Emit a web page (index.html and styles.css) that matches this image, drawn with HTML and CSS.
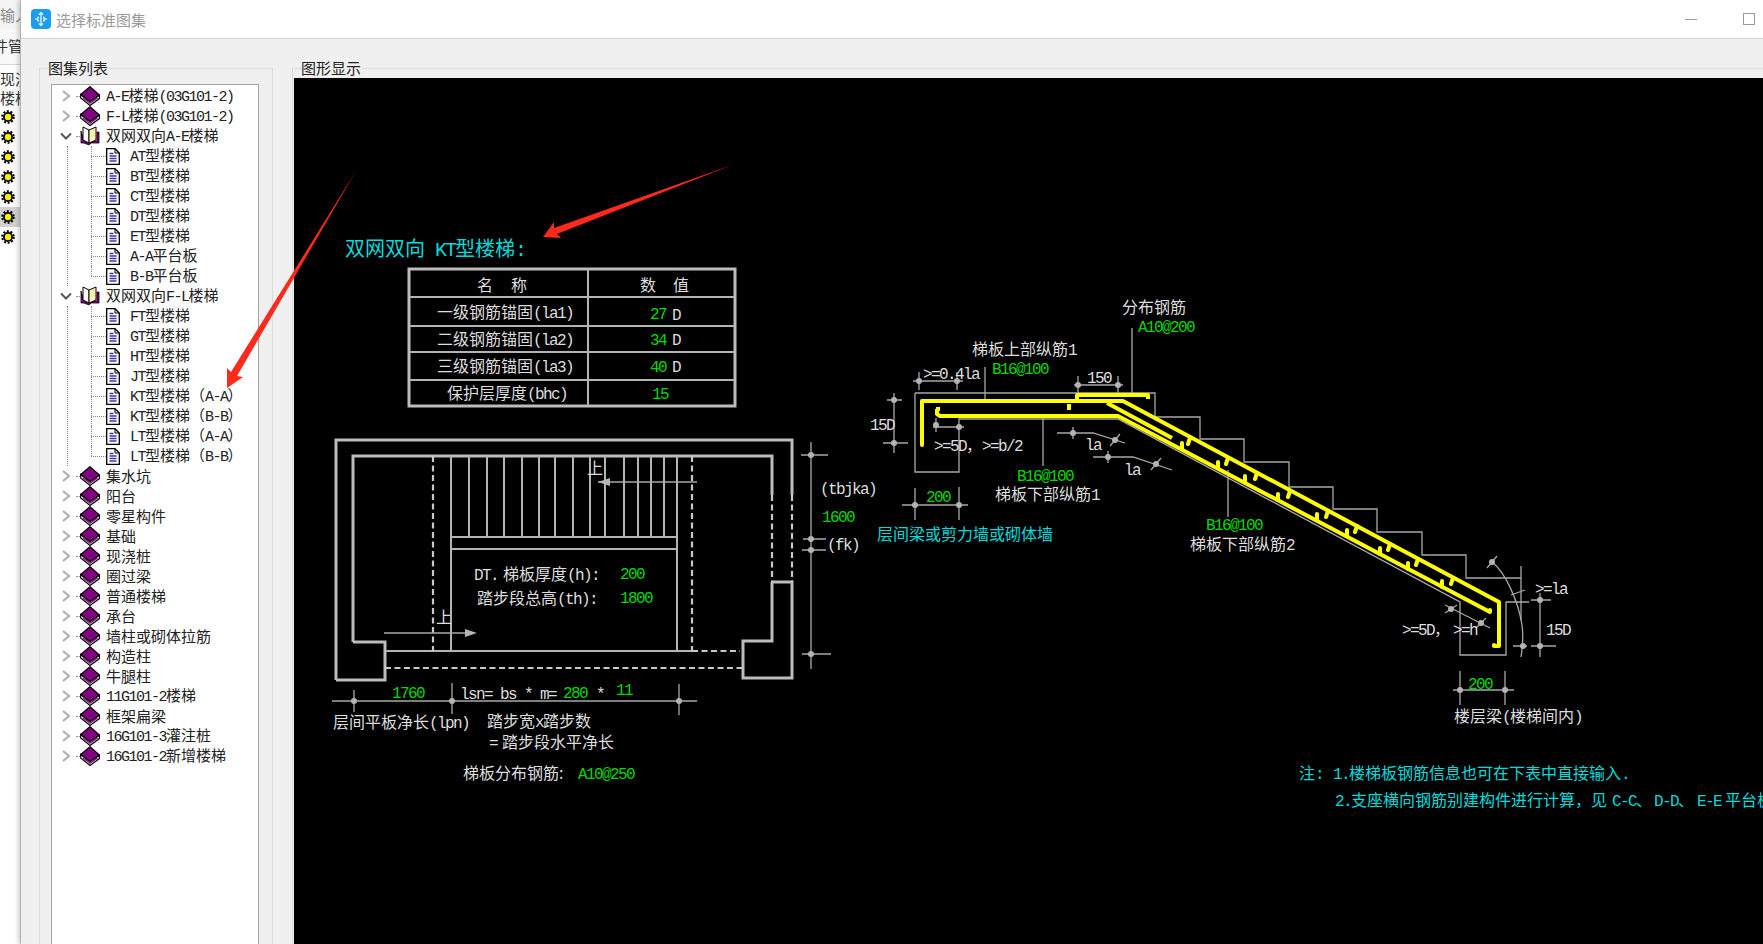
FILE: index.html
```html
<!DOCTYPE html>
<html lang="zh-CN">
<head>
<meta charset="utf-8">
<title>选择标准图集</title>
<link rel="stylesheet" href="styles.css">
</head>
<body>
<svg width="0" height="0" class="defs">
  <symbol id="book" viewBox="0 0 20 20">
    <path d="M.700 8.500v3.500L10 19.500l9.500-7V9L10 15.500z" fill="#fff" stroke="#000" stroke-width="1.200"/>
    <path d="M.700 8.500 10 .700l9.500 8.300L10 15.500z" fill="#800080" stroke="#000" stroke-width="1.200"/>
    <path d="M3 12l7 5.200 7.500-5.200" fill="none" stroke="#800080" stroke-width="1.100"/>
  </symbol>
  <symbol id="open" viewBox="0 0 20 20">
    <path d="M1 5v12h3l5 2 2-2h8V6h-2v9h-6l-3 2-4-2z" fill="#800080" stroke="#000" stroke-width=".8"/>
    <path d="M3 1l6 3v13l-6-3z" fill="#fff" stroke="#000"/>
    <path d="M9 4l7-3v13l-7 3z" fill="#ffffc0" stroke="#000"/>
    <path d="M12 4v8M14 3v8" stroke="#c8c870" stroke-dasharray="1 1"/>
  </symbol>
  <symbol id="doc" viewBox="0 0 14 17">
    <path d="M.700.700h8.300l4.300 4.300v11.300H.700z" fill="#fff" stroke="#000" stroke-width="1.300"/>
    <path d="M9 1v4h4" fill="none" stroke="#000"/>
    <path d="M3.500 5.500h4M3.500 8h7M3.500 10.500h7M3.500 13h7" stroke="#3a3aa8" stroke-width="1.300"/>
  </symbol>
  <symbol id="closed" viewBox="0 0 14 14"><path d="M4 2l6 5-6 5" fill="none" stroke="#b0b0b0" stroke-width="2.200"/></symbol>
  <symbol id="expanded" viewBox="0 0 14 14"><path d="M2 4.500l5 5 5-5" fill="none" stroke="#555" stroke-width="2"/></symbol>
  <symbol id="gear" viewBox="0 0 14 14">
    <circle cx="7" cy="7" r="5" fill="#000"/>
    <circle cx="7" cy="7" r="5.800" fill="none" stroke="#000" stroke-width="2" stroke-dasharray="2 1.640"/>
    <circle cx="7" cy="7" r="3.200" fill="#f5f000"/>
  </symbol>
</svg>

<div class="app">
  <aside class="strip">
    <div class="strip-top">输入</div>
    <div class="strip-sub"><span>件管</span></div>
    <div class="strip-list">
      <div class="strip-text">现浇</div>
      <div class="strip-text">楼梯</div>
      <div class="gear-row"><svg class="gear"><use href="#gear"/></svg></div>
      <div class="gear-row"><svg class="gear"><use href="#gear"/></svg></div>
      <div class="gear-row"><svg class="gear"><use href="#gear"/></svg></div>
      <div class="gear-row"><svg class="gear"><use href="#gear"/></svg></div>
      <div class="gear-row"><svg class="gear"><use href="#gear"/></svg></div>
      <div class="gear-row is-selected"><svg class="gear"><use href="#gear"/></svg></div>
      <div class="gear-row"><svg class="gear"><use href="#gear"/></svg></div>
    </div>
  </aside>

  <main class="dialog">
    <header class="titlebar">
      <svg class="app-icon" viewBox="0 0 20 20">
        <rect width="20" height="20" rx="4" fill="#1c9cf2"/>
        <path d="M10 3.500v13M4 10h3.500M12.500 10H16M8 5.500 10 3.500l2 2M8 14.500l2 2 2-2M7.500 7.500a4 4 0 0 0 0 5M12.500 7.500a4 4 0 0 1 0 5" fill="none" stroke="#fff" stroke-width="1.200"/>
      </svg>
      <span class="title">选择标准图集</span>
      <span class="win-buttons">
        <span class="win-min"></span>
        <span class="win-max"></span>
      </span>
    </header>

    <div class="dialog-body">
      <section class="group group-list">
        <span class="group-label">图集列表</span>
        <div class="tree">
          <div class="row"><svg class="chev"><use href="#closed"/></svg><i class="stub"></i><svg class="bk"><use href="#book"/></svg><span class="lbl"><b>A-E</b>楼梯<b>(03G101-2)</b></span></div>
          <div class="row"><svg class="chev"><use href="#closed"/></svg><i class="stub"></i><svg class="bk"><use href="#book"/></svg><span class="lbl"><b>F-L</b>楼梯<b>(03G101-2)</b></span></div>
          <div class="row"><svg class="chev"><use href="#expanded"/></svg><i class="stub"></i><svg class="bk"><use href="#open"/></svg><span class="lbl">双网双向<b>A-E</b>楼梯</span></div>
          <div class="kids">
            <div class="kid"><i class="link"></i><svg class="dc"><use href="#doc"/></svg><span class="lbl"><b>AT</b>型楼梯</span></div>
            <div class="kid"><i class="link"></i><svg class="dc"><use href="#doc"/></svg><span class="lbl"><b>BT</b>型楼梯</span></div>
            <div class="kid"><i class="link"></i><svg class="dc"><use href="#doc"/></svg><span class="lbl"><b>CT</b>型楼梯</span></div>
            <div class="kid"><i class="link"></i><svg class="dc"><use href="#doc"/></svg><span class="lbl"><b>DT</b>型楼梯</span></div>
            <div class="kid"><i class="link"></i><svg class="dc"><use href="#doc"/></svg><span class="lbl"><b>ET</b>型楼梯</span></div>
            <div class="kid"><i class="link"></i><svg class="dc"><use href="#doc"/></svg><span class="lbl"><b>A-A</b>平台板</span></div>
            <div class="kid"><i class="link"></i><svg class="dc"><use href="#doc"/></svg><span class="lbl"><b>B-B</b>平台板</span></div>
          </div>
          <div class="row"><svg class="chev"><use href="#expanded"/></svg><i class="stub"></i><svg class="bk"><use href="#open"/></svg><span class="lbl">双网双向<b>F-L</b>楼梯</span></div>
          <div class="kids">
            <div class="kid"><i class="link"></i><svg class="dc"><use href="#doc"/></svg><span class="lbl"><b>FT</b>型楼梯</span></div>
            <div class="kid"><i class="link"></i><svg class="dc"><use href="#doc"/></svg><span class="lbl"><b>GT</b>型楼梯</span></div>
            <div class="kid"><i class="link"></i><svg class="dc"><use href="#doc"/></svg><span class="lbl"><b>HT</b>型楼梯</span></div>
            <div class="kid"><i class="link"></i><svg class="dc"><use href="#doc"/></svg><span class="lbl"><b>JT</b>型楼梯</span></div>
            <div class="kid"><i class="link"></i><svg class="dc"><use href="#doc"/></svg><span class="lbl"><b>KT</b>型楼梯（<b>A-A</b>）</span></div>
            <div class="kid"><i class="link"></i><svg class="dc"><use href="#doc"/></svg><span class="lbl"><b>KT</b>型楼梯（<b>B-B</b>）</span></div>
            <div class="kid"><i class="link"></i><svg class="dc"><use href="#doc"/></svg><span class="lbl"><b>LT</b>型楼梯（<b>A-A</b>）</span></div>
            <div class="kid"><i class="link"></i><svg class="dc"><use href="#doc"/></svg><span class="lbl"><b>LT</b>型楼梯（<b>B-B</b>）</span></div>
          </div>
          <div class="row"><svg class="chev"><use href="#closed"/></svg><i class="stub"></i><svg class="bk"><use href="#book"/></svg><span class="lbl">集水坑</span></div>
          <div class="row"><svg class="chev"><use href="#closed"/></svg><i class="stub"></i><svg class="bk"><use href="#book"/></svg><span class="lbl">阳台</span></div>
          <div class="row"><svg class="chev"><use href="#closed"/></svg><i class="stub"></i><svg class="bk"><use href="#book"/></svg><span class="lbl">零星构件</span></div>
          <div class="row"><svg class="chev"><use href="#closed"/></svg><i class="stub"></i><svg class="bk"><use href="#book"/></svg><span class="lbl">基础</span></div>
          <div class="row"><svg class="chev"><use href="#closed"/></svg><i class="stub"></i><svg class="bk"><use href="#book"/></svg><span class="lbl">现浇桩</span></div>
          <div class="row"><svg class="chev"><use href="#closed"/></svg><i class="stub"></i><svg class="bk"><use href="#book"/></svg><span class="lbl">圈过梁</span></div>
          <div class="row"><svg class="chev"><use href="#closed"/></svg><i class="stub"></i><svg class="bk"><use href="#book"/></svg><span class="lbl">普通楼梯</span></div>
          <div class="row"><svg class="chev"><use href="#closed"/></svg><i class="stub"></i><svg class="bk"><use href="#book"/></svg><span class="lbl">承台</span></div>
          <div class="row"><svg class="chev"><use href="#closed"/></svg><i class="stub"></i><svg class="bk"><use href="#book"/></svg><span class="lbl">墙柱或砌体拉筋</span></div>
          <div class="row"><svg class="chev"><use href="#closed"/></svg><i class="stub"></i><svg class="bk"><use href="#book"/></svg><span class="lbl">构造柱</span></div>
          <div class="row"><svg class="chev"><use href="#closed"/></svg><i class="stub"></i><svg class="bk"><use href="#book"/></svg><span class="lbl">牛腿柱</span></div>
          <div class="row"><svg class="chev"><use href="#closed"/></svg><i class="stub"></i><svg class="bk"><use href="#book"/></svg><span class="lbl"><b>11G101-2</b>楼梯</span></div>
          <div class="row"><svg class="chev"><use href="#closed"/></svg><i class="stub"></i><svg class="bk"><use href="#book"/></svg><span class="lbl">框架扁梁</span></div>
          <div class="row"><svg class="chev"><use href="#closed"/></svg><i class="stub"></i><svg class="bk"><use href="#book"/></svg><span class="lbl"><b>16G101-3</b>灌注桩</span></div>
          <div class="row"><svg class="chev"><use href="#closed"/></svg><i class="stub"></i><svg class="bk"><use href="#book"/></svg><span class="lbl"><b>16G101-2</b>新增楼梯</span></div>
        </div>
      </section>

      <section class="group group-view">
        <span class="group-label">图形显示</span>
        <svg class="canvas" viewBox="294 78 1469 866">
          <!-- heading and parameter table -->
          <text class="c h1" x="345" y="249">双网双向<tspan class="l" x="435">KT</tspan><tspan x="455">型楼梯</tspan><tspan class="l" x="515">:</tspan></text>
          <rect class="w2" x="409" y="269" width="326" height="137"/>
          <path class="w1" d="M588 269v137M409 297h326M409 326h326M409 352h326M409 380h326"/>
          <text class="w" x="477" y="285">名</text><text class="w" x="511" y="285">称</text>
          <text class="w" x="640" y="285">数</text><text class="w" x="673" y="285">值</text>
          <text class="w" x="437" y="312">一级钢筋锚固<tspan class="l">(la1)</tspan></text>
          <text class="w" x="437" y="339">二级钢筋锚固<tspan class="l">(la2)</tspan></text>
          <text class="w" x="437" y="366">三级钢筋锚固<tspan class="l">(la3)</tspan></text>
          <text class="w" x="447" y="393">保护层厚度<tspan class="l">(bhc)</tspan></text>
          <text class="g l" x="650" y="313">27</text><text class="w l" x="672" y="314">D</text>
          <text class="g l" x="650" y="339">34</text><text class="w l" x="672" y="339">D</text>
          <text class="g l" x="650" y="366">40</text><text class="w l" x="672" y="366">D</text>
          <text class="g l" x="652" y="393">15</text>

          <!-- stair plan -->
          <path class="w2" d="M336 680V440H792V495M353 642V456H772V495M353 642H385V680H336M772 582V641H743V678H792V582H772"/>
          <path class="w1" d="M451 456V651M677 456V651M385 651H692M451 537H677M451 549H677M469 456V537M487 456V537M504 456V537M522 456V537M539 456V537M555 456V537M573 456V537M590 456V537M605 456V537M624 456V537M638 456V537M651 456V537M664 456V537"/>
          <path class="dash" d="M433 456V651M692 456V651M692 651H740M385 668H743M772 495V582M792 495V582"/>
          <path class="thin" d="M598 482H697M384 633H470M811 442V669M801 455H828M803 539H826M802 550H826M802 654H831M332 701H697M354 690V712M452 683V714M679 684V715"/>
          <path class="fill" d="M598 482l12-4v8zM477 633l-12-4v8z"/>
          <text class="w" x="587" y="468">上</text><text class="w" x="436" y="617">上</text>
          <g class="dots"><circle cx="811" cy="455" r="3"/><circle cx="811" cy="539" r="3"/><circle cx="811" cy="550" r="3"/><circle cx="811" cy="654" r="3"/><circle cx="354" cy="701" r="3"/><circle cx="452" cy="701" r="3"/><circle cx="679" cy="701" r="3"/></g>
          <text class="w l" x="820" y="488">(tbjka)</text>
          <text class="g l" x="822" y="516">1600</text>
          <text class="w l" x="827" y="544">(fk)</text>
          <text class="w" x="474" y="574"><tspan class="l">DT.</tspan><tspan x="503">梯板厚度</tspan><tspan class="l">(h):</tspan></text>
          <text class="g l" x="620" y="573">200</text>
          <text class="w" x="477" y="598">踏步段总高<tspan class="l">(th):</tspan></text>
          <text class="g l" x="620" y="597">1800</text>
          <text class="g l" x="392" y="692">1760</text>
          <text class="w l" x="460" y="693">lsn= bs * m=</text>
          <text class="g l" x="563" y="692">280</text>
          <text class="w l" x="596" y="693">*</text>
          <text class="g l" x="616" y="689">11</text>
          <text class="w" x="333" y="722">层间平板净长<tspan class="l">(lpn)</tspan></text>
          <text class="w" x="487" y="721">踏步宽<tspan class="l">x</tspan>踏步数</text>
          <text class="w" x="489" y="742"><tspan class="l">=</tspan><tspan x="502">踏步段水平净长</tspan></text>
          <text class="w" x="463" y="773">梯板分布钢筋:</text>
          <text class="g l" x="578" y="773">A10@250</text>

          <!-- stair section -->
          <path class="thin" d="M915 393H1155V417H1200V439H1244V462H1289V487H1333V509H1377V532H1422V555H1466V578H1521M915 393V472H959V419H1118L1460 602V655H1506V602H1529M1521 566V620M1132 328V395M985 367V400M1043 417V466M1228 470V517M913 381H963M919 372V390M957 372V390M1074 385H1123M1078 376V394M1118 376V394M894 393V453M887 400H902M883 443H908M933 427H964M936 418V432M1057 433H1093L1125 443M1093 457H1133L1172 470M902 505H968M915 488V520M959 487V520M1445 605 1490 628M1531 600H1551M1531 646H1556M1540 593V657M1453 690H1514M1460 671V705M1505 671V705M1513 646H1527M1073 427V439M1110 446 1120 434M1108 451V463M1151 470 1161 458M1445 613 1457 605M1476 628 1486 618M1487 568 1497 556M1511 595 1525 590"/>
          <path class="curve" d="M1492 562C1505 572 1518 600 1522 625C1524 640 1522 650 1521 657"/>
          <g class="dots"><circle cx="919" cy="381" r="3"/><circle cx="957" cy="381" r="3"/><circle cx="1078" cy="385" r="3"/><circle cx="1118" cy="385" r="3"/><circle cx="894" cy="400" r="3"/><circle cx="894" cy="443" r="3"/><circle cx="936" cy="425" r="3"/><circle cx="959" cy="427" r="3"/><circle cx="1073" cy="433" r="3"/><circle cx="1115" cy="440" r="3"/><circle cx="1108" cy="457" r="3"/><circle cx="1156" cy="464" r="3"/><circle cx="915" cy="505" r="3"/><circle cx="959" cy="505" r="3"/><circle cx="1451" cy="609" r="3"/><circle cx="1481" cy="623" r="3"/><circle cx="1492" cy="562" r="3"/><circle cx="1523" cy="646" r="3"/><circle cx="1540" cy="600" r="3"/><circle cx="1540" cy="646" r="3"/><circle cx="1460" cy="690" r="3"/><circle cx="1505" cy="690" r="3"/></g>
          <path class="rebar" d="M922 445V401H1123L1499 602V646H1494M1077 401V395H1148V399M1069 410V404M1107 403 1172 438M936 409H940M937 409V414L940 416H1118L1490 612"/>
          <path class="barb" d="M1190 438l-2 6M1228 458l-2 6M1257 473l-2 6M1290 491l-2 6M1328 511l-2 6M1357 526l-2 6M1390 544l-2 6M1418 559l-2 6M1453 578l-2 6M1182 449v-6M1218 468v-6M1245 482v-6M1278 500v-6M1317 520v-6M1347 536v-6M1380 554v-6M1408 569v-6M1442 587v-6M922 445v-2M1490 612v-2M1494 646v-1"/>
          <text class="w" x="1122" y="307">分布钢筋</text>
          <text class="g l" x="1138" y="326">A10@200</text>
          <text class="w" x="972" y="349">梯板上部纵筋<tspan class="l">1</tspan></text>
          <text class="g l" x="992" y="368">B16@100</text>
          <text class="w l" x="923" y="373">&gt;=0.4la</text>
          <text class="w l" x="1087" y="377">150</text>
          <text class="w l" x="870" y="424">15D</text>
          <text class="w" x="934" y="445"><tspan class="l">&gt;=5D</tspan>，<tspan class="l">&gt;=b/2</tspan></text>
          <text class="w l" x="1085" y="444">la</text>
          <text class="w l" x="1124" y="469">la</text>
          <text class="g l" x="1017" y="475">B16@100</text>
          <text class="w" x="995" y="494">梯板下部纵筋<tspan class="l">1</tspan></text>
          <text class="g l" x="926" y="496">200</text>
          <text class="c" x="877" y="534">层间梁或剪力墙或砌体墙</text>
          <text class="g l" x="1206" y="524">B16@100</text>
          <text class="w" x="1190" y="544">梯板下部纵筋<tspan class="l">2</tspan></text>
          <text class="w" x="1402" y="629"><tspan class="l">&gt;=5D</tspan>，<tspan class="l" x="1453">&gt;=h</tspan></text>
          <text class="w l" x="1535" y="588">&gt;=la</text>
          <text class="w l" x="1546" y="629">15D</text>
          <text class="g l" x="1468" y="683">200</text>
          <text class="w" x="1454" y="716">楼层梁<tspan class="l">(</tspan>楼梯间内<tspan class="l">)</tspan></text>

          <!-- notes -->
          <text class="c" x="1299" y="773">注<tspan class="l">:</tspan><tspan class="l" x="1333">1.</tspan>楼梯板钢筋信息也可在下表中直接输入<tspan class="l">.</tspan></text>
          <text class="c" x="1335" y="800"><tspan class="l">2.</tspan>支座横向钢筋别建构件进行计算，见<tspan class="l" x="1612">C-C</tspan><tspan x="1636">、</tspan><tspan class="l" x="1654">D-D</tspan><tspan x="1678">、</tspan><tspan class="l" x="1697">E-E</tspan><tspan x="1725">平台板</tspan></text>
        </svg>
      </section>
    </div>
  </main>
</div>

<svg class="overlay" viewBox="0 0 1763 944">
  <polygon class="arrow" points="356,171 237,376 243,377 227,388 227,368 231,372"/>
  <polygon class="arrow" points="732,165 554,228 554,222 543,237 561,238 557,234"/>
</svg>
</body>
</html>
```
FILE: styles.css
```css
html, body {
  margin: 0;
  height: 100%;
  overflow: hidden;
  background: #f0f0f0;
}
body {
  position: relative;
  width: 1763px;
  height: 944px;
  font-family: "Noto Sans CJK SC", sans-serif;
  font-size: 15px;
  color: #222;
}
.defs { position: absolute; }
.app { display: flex; height: 944px; }

/* application behind the dialog */
.strip {
  flex: 0 0 20px;
  overflow: hidden;
  background: #fff;
  white-space: nowrap;
  color: #333;
}
.strip-top {
  height: 30px;
  line-height: 30px;
  background: #f4f4f4;
  color: #8a8a8a;
}
.strip-sub {
  height: 34px;
  line-height: 32px;
  border-bottom: 1px solid #d8d8d8;
  background: #f8f8f8;
}
.strip-sub span { display: block; margin-left: -7px; }
.strip-list { padding-top: 5px; }
.strip-text { height: 18.500px; line-height: 18.500px; }
.gear-row { display: flex; align-items: center; height: 20px; padding-left: 1px; }
.gear-row.is-selected { background: #d0d0d0; }
.gear { width: 14px; height: 14px; }

/* dialog */
.dialog {
  flex: 1;
  min-width: 0;
  display: flex;
  flex-direction: column;
  border-left: 1px solid #b4b4b4;
  box-shadow: -2px 0 4px rgba(0, 0, 0, .18);
  z-index: 1;
}
.titlebar {
  display: flex;
  align-items: center;
  height: 38px;
  flex: none;
  padding-left: 10px;
  background: #fff;
  border-bottom: 1px solid #d6d6d6;
}
.app-icon { width: 20px; height: 20px; margin-right: 5px; }
.title { color: #9a9a9a; font-size: 15px; }
.win-buttons {
  margin-left: auto;
  display: flex;
  align-items: center;
  gap: 46px;
  padding-right: 8px;
}
.win-min { width: 12px; height: 1px; background: #999; }
.win-max { width: 10px; height: 10px; border: 1px solid #999; }

.dialog-body {
  flex: 1;
  min-height: 0;
  display: flex;
  gap: 19px;
  padding: 29px 0 0 18px;
  background: #f0f0f0;
}
.group {
  position: relative;
  border: 1px solid #dcdcdc;
  border-bottom: 0;
}
.group-label {
  position: absolute;
  top: -11px;
  left: 8px;
  line-height: 20px;
  padding-right: 1px;
  background: #f0f0f0;
  color: #222;
}
.group-list {
  flex: 0 0 234px;
  box-sizing: border-box;
  padding: 15px 13px 0 11px;
}
.group-view {
  flex: 1;
  min-width: 0;
  border-right: 0;
  padding: 9px 0 0 1px;
}
.canvas { display: block; width: 1469px; height: 866px; background: #000; }

/* tree */
.tree {
  height: 100%;
  box-sizing: border-box;
  padding-top: 1px;
  background: #fff;
  border: 1px solid #a4a4a4;
  border-bottom: 0;
  overflow: hidden;
}
.row, .kid { display: flex; align-items: center; height: 20px; white-space: nowrap; }
.chev { width: 14px; height: 14px; margin-left: 7px; flex: none; }
.stub { width: 4px; margin-left: 3px; border-top: 1px dotted #888; flex: none; }
.bk { width: 20px; height: 20px; flex: none; margin-right: 6px; }
.kids {
  margin-left: 15px;
  padding-left: 23px;
  border-left: 1px dotted #888;
}
.kid { position: relative; }
.kid::before {
  content: "";
  position: absolute;
  left: 0;
  top: 0;
  bottom: 0;
  border-left: 1px dotted #888;
}
.kid:last-child::before { bottom: 50%; }
.link { width: 15px; border-top: 1px dotted #888; flex: none; }
.dc { width: 14px; height: 17px; flex: none; margin-right: 10px; }
.lbl { line-height: 20px; }
.lbl b {
  font-family: "Liberation Mono", monospace;
  font-weight: 400;
  letter-spacing: -.1em;
}

/* CAD drawing */
.canvas text {
  font-family: "Noto Sans CJK SC", sans-serif;
  font-size: 16px;
  transform: translateY(5.5px);
}
.canvas .l {
  font-family: "Liberation Mono", monospace;
  letter-spacing: -.1em;
  white-space: pre;
}
.canvas .h1 { font-size: 20px; transform: translateY(7px); }
.w { fill: #dedede; }
.g { fill: #00d800; }
.c { fill: #00dcdc; }
.w1, .w2, .thin, .dash, .curve, .rebar, .barb { fill: none; }
.w1 { stroke: #b4b4b4; stroke-width: 2; }
.w2 { stroke: #bcbcbc; stroke-width: 3; }
.thin, .curve { stroke: #a8a8a8; stroke-width: 1.300; }
.dash { stroke: #c8c8c8; stroke-width: 2.200; stroke-dasharray: 6 3.500; }
.fill { fill: #b4b4b4; }
.dots { fill: #b4b4b4; }
.rebar { stroke: #ffff00; stroke-width: 4; stroke-linejoin: round; }
.barb { stroke: #ffff00; stroke-width: 4; stroke-linecap: round; }

/* annotation arrows drawn over the screenshot */
.overlay {
  position: absolute;
  left: 0;
  top: 0;
  width: 1763px;
  height: 944px;
  z-index: 2;
  pointer-events: none;
}
.arrow { fill: #fb2a1c; }
```
